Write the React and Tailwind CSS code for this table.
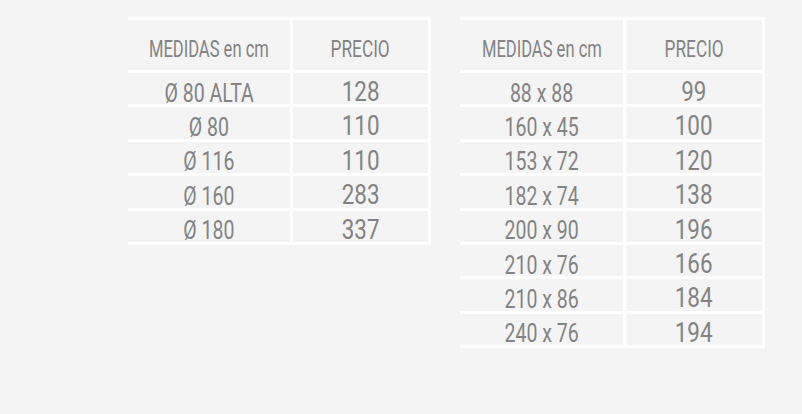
import React from "react";

const left = [
  ["Ø 80 ALTA", "128"],
  ["Ø 80", "110"],
  ["Ø 116", "110"],
  ["Ø 160", "283"],
  ["Ø 180", "337"],
];
const right = [
  ["88 x 88", "99"],
  ["160 x 45", "100"],
  ["153 x 72", "120"],
  ["182 x 74", "138"],
  ["200 x 90", "196"],
  ["210 x 76", "166"],
  ["210 x 86", "184"],
  ["240 x 76", "194"],
];

function Table({ rows, w1, w2 }) {
  return (
    <div className="flex flex-col border-t-[3px] border-white">
      <div className="flex h-[53px] border-b-[3px] border-white">
        <div className={`${w1} flex justify-center border-r-[3px] border-white pt-[16.5px]`}>
          <span className="inline-block whitespace-nowrap text-[24px] leading-none scale-x-[0.69] origin-center">MEDIDAS en cm</span>
        </div>
        <div className={`${w2} flex justify-center border-r-[3px] border-white pt-[16.5px]`}>
          <span className="inline-block whitespace-nowrap text-[24px] leading-none scale-x-[0.72] origin-center">PRECIO</span>
        </div>
      </div>
      {rows.map(([m, p], i) => (
        <div key={i} className="flex h-[34.4px] border-b-[3px] border-white">
          <div className={`${w1} flex justify-center border-r-[3px] border-white pt-[7.7px]`}>
            <span className="inline-block whitespace-nowrap text-[25px] leading-none scale-x-[0.78] origin-center">{m}</span>
          </div>
          <div className={`${w2} flex justify-center border-r-[3px] border-white pt-[5.1px]`}>
            <span className="inline-block whitespace-nowrap text-[28px] leading-none scale-x-[0.8] origin-center">{p}</span>
          </div>
        </div>
      ))}
    </div>
  );
}

export default function App() {
  return (
    <div
      className="w-[802px] h-[414px] bg-[#f4f4f4] flex items-start gap-[29px] pl-[128px] pt-[17px] text-[#838383]"
      style={{ fontFamily: "Roboto, 'Liberation Sans', sans-serif" }}
    >
      <Table rows={left} w1="w-[165px]" w2="w-[138px]" />
      <Table rows={right} w1="w-[166px]" w2="w-[139px]" />
    </div>
  );
}
